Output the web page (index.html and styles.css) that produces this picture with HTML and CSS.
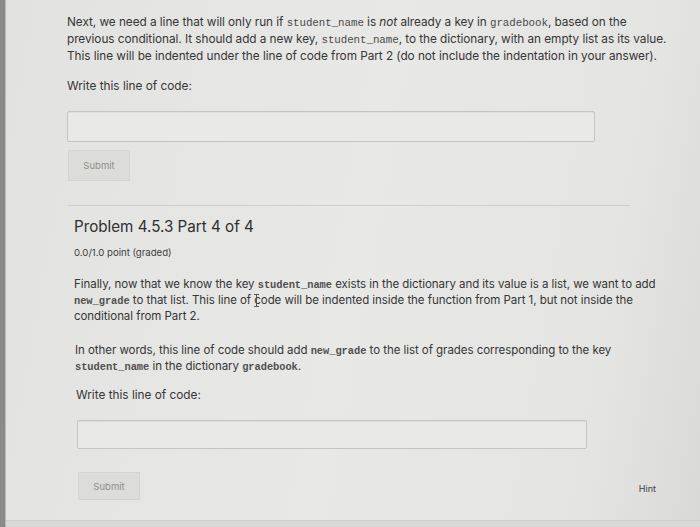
FILE: index.html
```html
<!DOCTYPE html>
<html>
<head>
<meta charset="utf-8">
<link rel="stylesheet" href="styles.css">
</head>
<body>
<div class="edge"></div>
<main class="page">
  <section class="part part-top">
    <p class="para">Next, we need a line that will only run if <code>student_name</code> is <em>not</em> already a key in <code>gradebook</code>, based on the previous conditional. It should add a new key, <code>student_name</code>, to the dictionary, with an empty list as its value. This line will be indented under the line of code from Part 2 (do not include the indentation in your answer).</p>
    <p class="label">Write this line of code:</p>
    <div class="input input-top"></div>
    <div class="btn btn-top">Submit</div>
  </section>
  <hr class="divider">
  <section class="part part-bottom">
    <h2 class="title">Problem 4.5.3 Part 4 of 4</h2>
    <div class="points">0.0/1.0 point (graded)</div>
    <p class="para p2">Finally, now that we know the key <code>student_name</code> exists in the dictionary and its value is a list, we want to add <code>new_grade</code> to that list. This line of <span class="cursor"></span>code will be indented inside the function from Part 1, but not inside the conditional from Part 2.</p>
    <p class="para p3">In other words, this line of code should add <code>new_grade</code> to the list of grades corresponding to the key <code>student_name</code> in the dictionary <code>gradebook</code>.</p>
    <p class="label label2">Write this line of code:</p>
    <div class="input input-bottom"></div>
    <div class="actions">
      <div class="btn btn-bottom">Submit</div>
      <div class="hint">Hint</div>
    </div>
  </section>
</main>
</body>
</html>
```
FILE: styles.css
```css
html, body {
  margin: 0;
  padding: 0;
}
body {
  width: 700px;
  height: 527px;
  overflow: hidden;
  background: #d9d9d7;
  font-family: Inter, "Open Sans", sans-serif;
  color: #363636;
  display: flex;
  align-items: flex-start;
}
.edge {
  width: 5px;
  height: 527px;
  flex: none;
  background: #8a8a88;
  border-right: 1px solid #b8b8b6;
}
.page {
  flex: 1;
  box-sizing: border-box;
  height: 521px;
  padding: 14px 0 0 61px;
  background: linear-gradient(100deg, #e2e2e0 0%, #e8e8e6 50%, #e4e4e2 85%, #d9d9d7 100%);
  border-bottom: 1px solid #cfcfcd;
}
.para {
  margin: 0;
  font-size: 11.8px;
  line-height: 17px;
  width: 605px;
  letter-spacing: -0.05px;
}
code {
  font-family: "Liberation Mono", monospace;
  font-weight: normal;
  font-size: 10.8px;
  line-height: 1;
  color: #4a4a4a;
}
.part-bottom code {
  font-weight: bold;
  font-size: 10.4px;
  color: #505050;
}
em { font-style: italic; }
.label {
  margin: 13px 0 0;
  font-size: 11.8px;
  line-height: 17px;
}
.input {
  border: 1px solid #c4c4c2;
  border-radius: 2px;
  background: #e9e9e7;
  box-shadow: inset 0 1px 1px rgba(0,0,0,0.05);
}
.input-top {
  margin-top: 16px;
  width: 526px;
  height: 29px;
}
.btn {
  background: #dcdcda;
  border: 1px solid #d4d4d2;
  color: #8e8e8c;
  font-size: 9.5px;
  display: flex;
  align-items: center;
  justify-content: center;
}
.btn-top {
  margin-top: 8px;
  width: 60px;
  height: 29px;
  margin-left: 1px;
}
.divider {
  border: none;
  border-top: 1px solid #cfcfcd;
  margin: 24px 0 0 1px;
  width: 562px;
}
.part-bottom {
  padding-left: 7px;
}
.title {
  margin: 11px 0 0;
  font-weight: 400;
  font-size: 15.2px;
  line-height: 20px;
  color: #2f2f2f;
}
.points {
  margin-top: 10px;
  font-size: 9.6px;
  line-height: 12px;
  color: #3c3c3c;
}
.part-bottom .para {
  font-size: 11.5px;
  line-height: 16px;
}
.p2 {
  margin-top: 17px;
  width: 590px;
}
.p3 {
  margin-top: 18px;
  padding-left: 1px;
}
.cursor {
  display: inline-block;
  position: relative;
  width: 0;
  height: 12px;
  vertical-align: -2px;
}
.cursor::before {
  content: "";
  position: absolute;
  left: 2px;
  top: 0;
  width: 1px;
  height: 13px;
  background: #555;
}
.cursor::after {
  content: "";
  position: absolute;
  left: 0;
  top: 0;
  width: 5px;
  height: 11px;
  border-top: 1px solid #555;
  border-bottom: 1px solid #555;
}
.label2 {
  margin-top: 13px;
  padding-left: 2px;
}
.input-bottom {
  margin-top: 16px;
  margin-left: 3px;
  width: 508px;
  height: 27px;
}
.actions {
  display: flex;
  align-items: center;
  justify-content: space-between;
  width: 578px;
  margin-top: 23px;
  margin-left: 4px;
}
.btn-bottom {
  width: 60px;
  height: 26px;
}
.hint {
  font-size: 9px;
  color: #3c3c3c;
  padding-top: 4px;
}
```
